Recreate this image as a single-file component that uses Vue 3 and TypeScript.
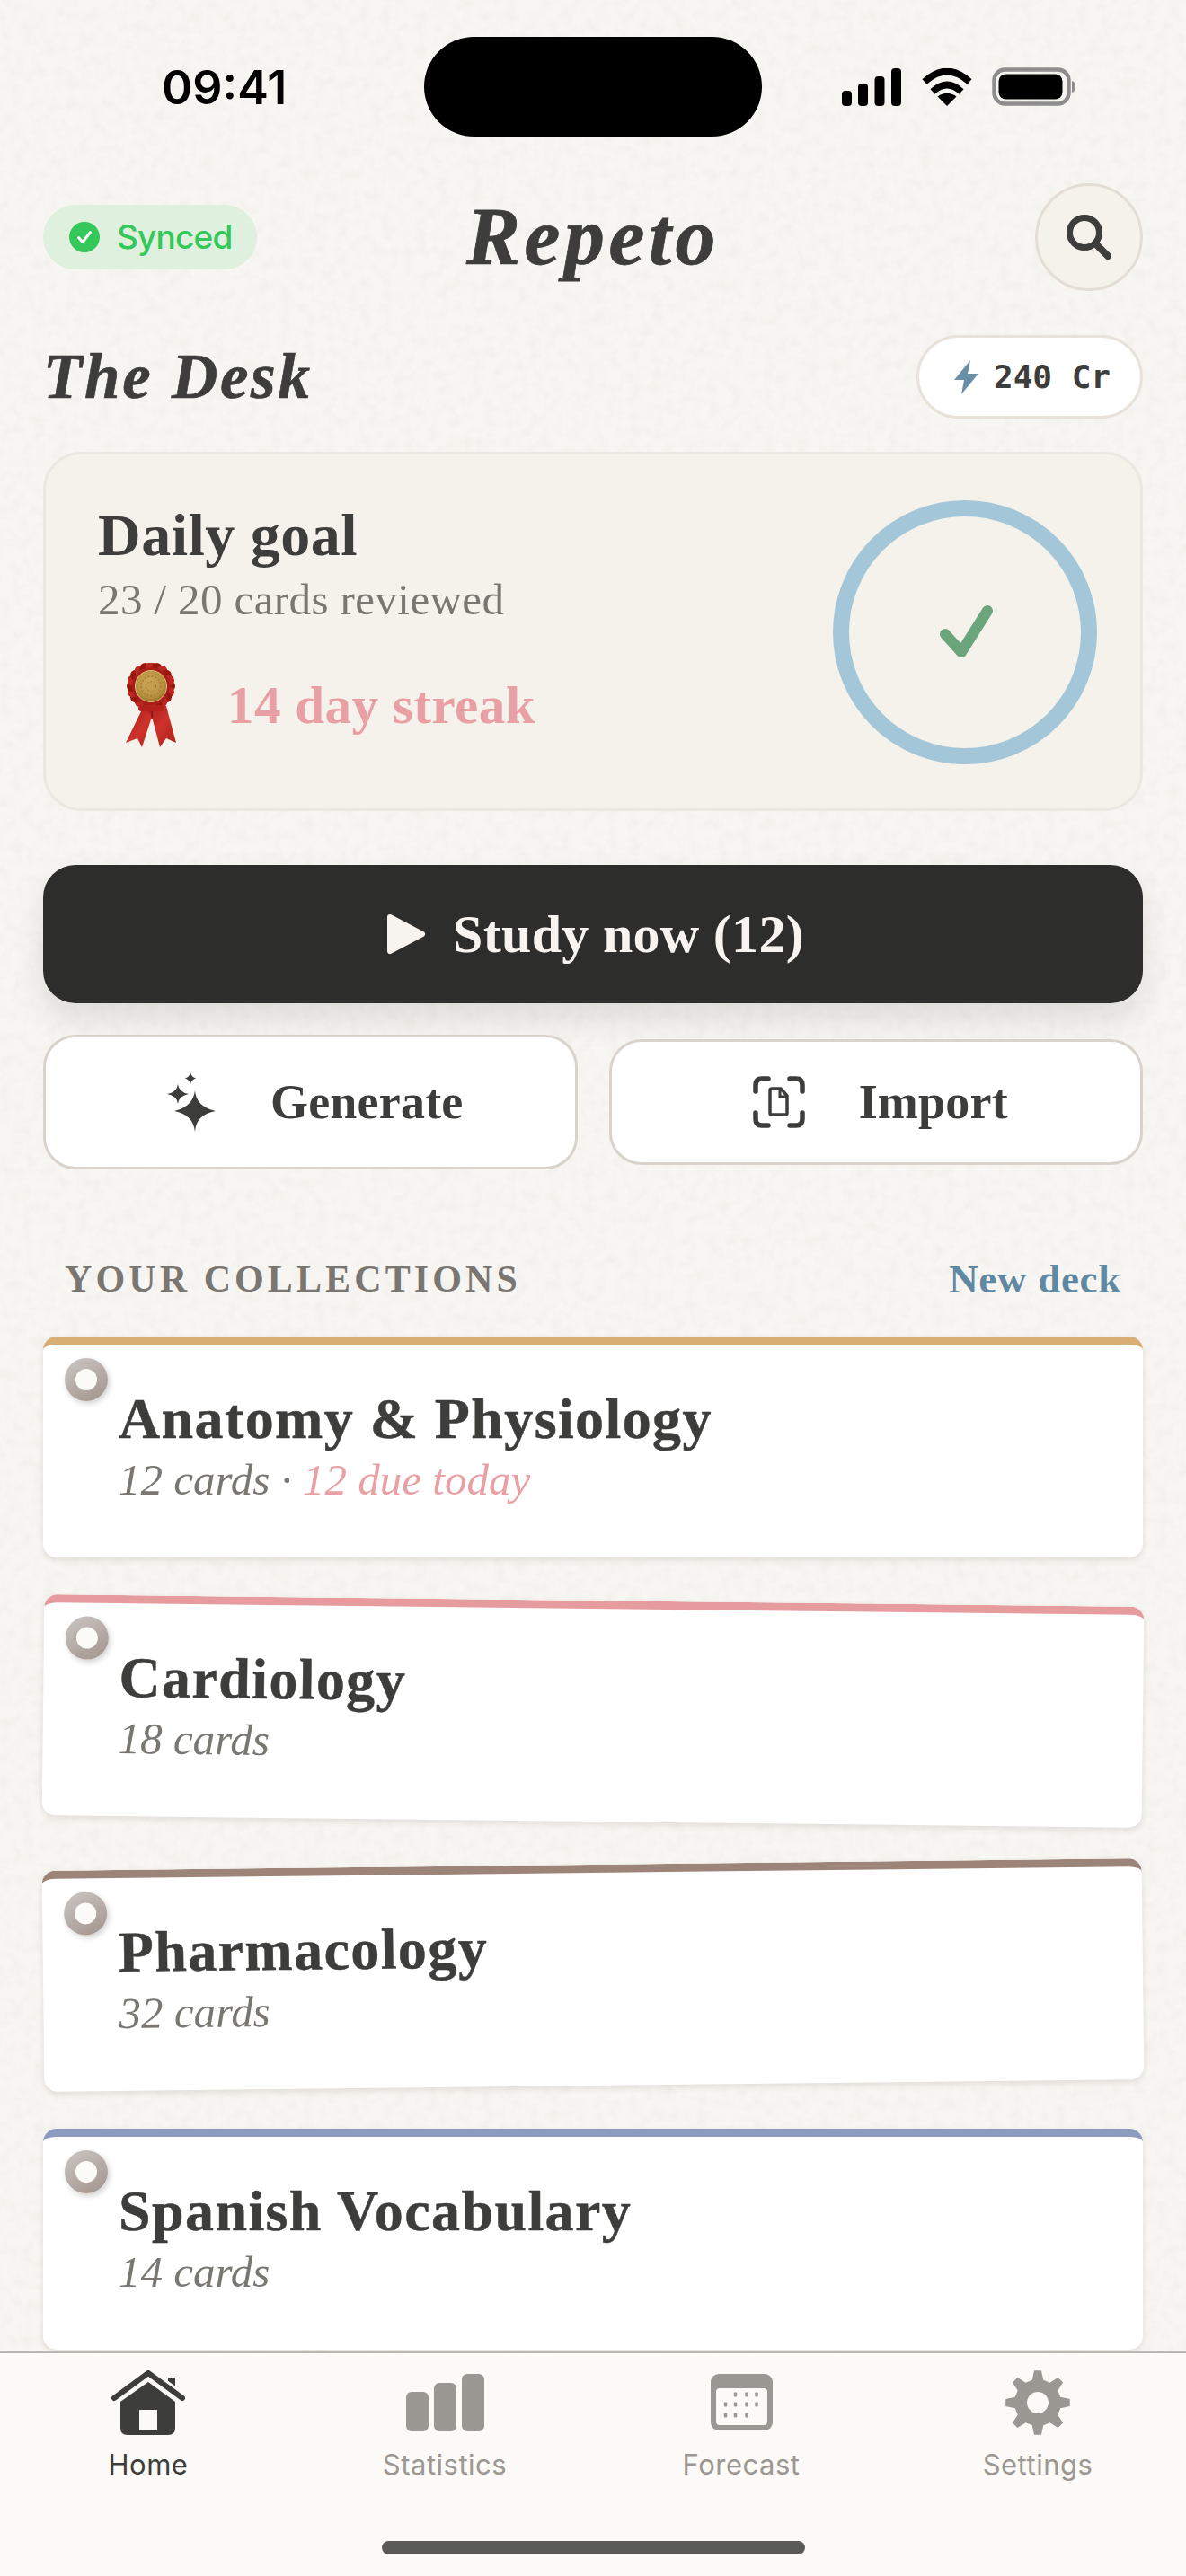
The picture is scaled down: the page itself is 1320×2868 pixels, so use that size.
<template>
  <div class="phone">
    <svg class="paper" width="1320" height="2868" aria-hidden="true">
      <filter id="grain" x="0" y="0" width="100%" height="100%">
        <feTurbulence type="fractalNoise" baseFrequency="0.08" numOctaves="4" seed="7" />
        <feColorMatrix type="matrix" values="0 0 0 0 0.6  0 0 0 0 0.58  0 0 0 0 0.52  0 0 0 0.24 -0.09" />
      </filter>
      <rect width="1320" height="2868" filter="url(#grain)" />
    </svg>

    <main class="screen">
      <div class="status-bar">
        <span class="time">09:41</span>
        <div class="island"></div>
        <div class="status-icons">
          <svg width="66" height="42" viewBox="0 0 66 42">
            <rect x="0" y="25" width="11" height="17" rx="4" />
            <rect x="18" y="17" width="11" height="25" rx="4" />
            <rect x="36.500" y="9" width="11" height="33" rx="4" />
            <rect x="55" y="0" width="11" height="42" rx="4" />
          </svg>
          <svg width="58" height="42" viewBox="0 0 58 42">
            <path d="M4 15Q29 -8 54 15" fill="none" stroke="#000" stroke-width="7.500" />
            <path d="M13 26Q29 11 45 26" fill="none" stroke="#000" stroke-width="7.500" />
            <path d="M29 42L18.500 31.500Q29 24 39.500 31.500Z" />
          </svg>
          <svg width="94" height="43" viewBox="0 0 94 43">
            <rect x="2.500" y="2.500" width="83" height="38" rx="12" fill="none" stroke="#8d8d8d" stroke-width="4.500" />
            <rect x="7.500" y="7.500" width="71" height="28" rx="8" />
            <path d="M89 15Q93 16 93 21.500Q93 27 89 28Z" fill="#8d8d8d" />
          </svg>
        </div>
      </div>

      <header class="top-bar">
        <div class="sync-pill">
          <svg width="34" height="34" viewBox="0 0 34 34">
            <circle cx="17" cy="17" r="17" fill="#34c759" />
            <path d="M10.500 17.500L15 22.500L23.500 11.500" fill="none" stroke="#fff" stroke-width="3" stroke-linecap="round" stroke-linejoin="round" />
          </svg>
          <span>Synced</span>
        </div>
        <h1 class="logo">Repeto</h1>
        <button class="search-btn">
          <svg width="50" height="50" viewBox="0 0 50 50">
            <circle cx="20" cy="20" r="16.500" fill="none" stroke="#3d3d3b" stroke-width="7" />
            <path d="M33 33L46 46" stroke="#3d3d3b" stroke-width="8" stroke-linecap="round" />
          </svg>
        </button>
      </header>

      <div class="desk-row">
        <h2 class="desk-title">The Desk</h2>
        <div class="credits">
          <svg width="27" height="38" viewBox="0 0 27 38">
            <path d="M18 0L0 22H11L8 38L27 15H15Z" fill="#6a8fa8" />
          </svg>
          <span>240 Cr</span>
        </div>
      </div>

      <section class="goal-card">
        <div class="goal-text">
          <h3>Daily goal</h3>
          <p class="goal-count">23 / 20 cards reviewed</p>
          <div class="streak">
            <svg width="56" height="94" viewBox="0 0 56 94">
              <defs>
                <radialGradient id="gold" cx="0.45" cy="0.4" r="0.65">
                  <stop offset="0" stop-color="#d3ac5c" />
                  <stop offset="0.7" stop-color="#b68f40" />
                  <stop offset="1" stop-color="#8f6b28" />
                </radialGradient>
                <linearGradient id="tail" x1="0" y1="0" x2="1" y2="1">
                  <stop offset="0" stop-color="#9e1c18" />
                  <stop offset="0.5" stop-color="#cf322b" />
                  <stop offset="1" stop-color="#a81f1a" />
                </linearGradient>
              </defs>
              <path d="M20 48L0 89L13 84L18 94L29 60L38 48Z" fill="url(#tail)" />
              <path d="M29 60L38 94L45 84L56 89L45 48L20 48Z" fill="url(#tail)" />
              <path d="M29 48V62" stroke="#8c1512" stroke-width="1.500" />
              <circle v-for="p in pleats" :key="p.key" :cx="p.x" :cy="p.y" r="6" :fill="p.fill" />
              <circle cx="28" cy="26" r="21" fill="#a91d19" />
              <rect x="14" y="47" width="28" height="7" rx="3.500" fill="#b3211c" />
              <circle cx="28" cy="26" r="17.500" fill="url(#gold)" stroke="#e0c077" stroke-width="1" />
              <circle cx="28" cy="26" r="11" fill="none" stroke="#a98437" stroke-width="2" stroke-dasharray="2 2" />
              <circle cx="28" cy="26" r="5.500" fill="#c49f50" stroke="#a07c32" stroke-dasharray="2 1.500" />
            </svg>
            <span>14 day streak</span>
          </div>
        </div>
        <svg class="ring" width="294" height="294" viewBox="0 0 294 294">
          <circle cx="147" cy="147" r="138" fill="none" stroke="#a3c7d9" stroke-width="18" />
          <path d="M125 149L143 169L172 123" fill="none" stroke="#6aa57b" stroke-width="12" stroke-linecap="round" stroke-linejoin="round" />
        </svg>
      </section>

      <button class="study-btn">
        <svg width="44" height="46" viewBox="0 0 44 46">
          <path d="M4 4L40 23L4 42Z" fill="#f7f4ef" stroke="#f7f4ef" stroke-width="6" stroke-linejoin="round" />
        </svg>
        <span>Study now (12)</span>
      </button>

      <div class="action-row">
        <button class="action-btn generate">
          <svg width="56" height="66" viewBox="0 0 56 66">
            <path d="M32 20Q33 38 55 43Q33 47 32 66Q30 47 9 43Q30 38 32 20Z" fill="#3d3d3b" />
            <path d="M13 13Q14 22 25 24Q14 26 13 35Q12 26 1 24Q12 22 13 13Z" fill="#3d3d3b" />
            <path d="M27 0Q28 5 33 6.500Q28 8 27 13Q26 8 21 6.500Q26 5 27 0Z" fill="#3d3d3b" />
          </svg>
          <span>Generate</span>
        </button>
        <button class="action-btn">
          <svg width="58" height="58" viewBox="0 0 58 58">
            <path d="M3 17V10Q3 3 10 3H17M41 3H48Q55 3 55 10V17M55 41V48Q55 55 48 55H41M17 55H10Q3 55 3 48V41" fill="none" stroke="#3d3d3b" stroke-width="5.500" stroke-linecap="round" />
            <path d="M21 14H31L38 22V41Q38 43 36 43H21Q19 43 19 41V16Q19 14 21 14Z" fill="none" stroke="#3d3d3b" stroke-width="3.500" stroke-linejoin="round" />
            <path d="M30 15V23H37" fill="none" stroke="#3d3d3b" stroke-width="3" />
          </svg>
          <span>Import</span>
        </button>
      </div>

      <div class="section-head">
        <span class="section-label">YOUR COLLECTIONS</span>
        <a class="new-deck">New deck</a>
      </div>

      <div class="deck-list">
        <article
          v-for="deck in decks"
          :key="deck.name"
          class="deck"
          :class="deck.tilt"
          :style="{ borderTopColor: deck.color }"
        >
          <span class="grommet"><i></i></span>
          <h4>{{ deck.name }}</h4>
          <p>{{ deck.cards }} cards<template v-if="deck.due"> · <em>{{ deck.due }} due today</em></template></p>
        </article>
      </div>
    </main>

    <nav class="tab-bar">
      <div class="tabs">
        <div class="tab active">
          <svg width="82" height="72" viewBox="0 0 82 72">
            <rect x="63" y="8" width="8" height="18" fill="#3d3d3b" />
            <path d="M3 31L41 3L79 31" fill="none" stroke="#fbfaf6" stroke-width="12" stroke-linecap="round" stroke-linejoin="round" />
            <path d="M3 31L41 3L79 31" fill="none" stroke="#3d3d3b" stroke-width="6" stroke-linecap="round" stroke-linejoin="round" />
            <path d="M41 13L71 35V64Q71 72 63 72H18Q10 72 10 64V35Z" fill="#3d3d3b" />
            <rect x="31" y="44" width="20" height="23" fill="#fbfaf6" />
          </svg>
          <span>Home</span>
        </div>
        <div class="tab">
          <svg width="87" height="72" viewBox="0 0 87 72">
            <rect x="0" y="24" width="25" height="44" rx="6" />
            <rect x="31" y="14" width="25" height="54" rx="6" />
            <rect x="62" y="4" width="25" height="64" rx="6" />
          </svg>
          <span>Statistics</span>
        </div>
        <div class="tab">
          <svg width="69" height="72" viewBox="0 0 69 72">
            <rect x="0" y="4" width="69" height="63" rx="9" />
            <rect x="6" y="20" width="57" height="41" rx="4" fill="#fbfaf6" />
            <rect v-for="d in calendarDots" :key="d.key" :x="d.x" :y="d.y" width="3.500" height="5" rx="1" />
          </svg>
          <span>Forecast</span>
        </div>
        <div class="tab">
          <svg width="72" height="72" viewBox="0 0 72 72">
            <path :d="gearPath" fill-rule="evenodd" />
          </svg>
          <span>Settings</span>
        </div>
      </div>
      <div class="home-indicator"></div>
    </nav>
  </div>
</template>

<script setup lang="ts">
type Deck = { name: string; cards: number; due?: number; color: string; tilt?: string }

const decks: Deck[] = [
  { name: 'Anatomy & Physiology', cards: 12, due: 12, color: '#d8ae74' },
  { name: 'Cardiology', cards: 18, color: '#e69b9e', tilt: 'tilt-right' },
  { name: 'Pharmacology', cards: 32, color: '#9c8478', tilt: 'tilt-left' },
  { name: 'Spanish Vocabulary', cards: 14, color: '#8c9bbf' }
]

const pleats = Array.from({ length: 20 }, (_, i) => {
  const a = (i / 20) * Math.PI * 2
  return {
    key: i,
    x: +(28 + Math.cos(a) * 21).toFixed(2),
    y: +(26 + Math.sin(a) * 21).toFixed(2),
    fill: i % 2 ? '#bd2721' : '#97170f'
  }
})

const calendarDots = [
  [27.5, 25], [40, 25], [51, 25],
  [16.5, 36], [27.5, 36], [40, 36], [51, 36],
  [16.5, 48], [27.5, 48], [40, 48]
].map(([x, y], key) => ({ key, x: x - 1.75, y: y - 0.5 }))

// gearshape with 8 teeth, outer ring plus hole
const gearPath = (() => {
  const teeth = 8
  const pts: string[] = []
  for (let i = 0; i < teeth; i++) {
    const a = (i / teeth) * Math.PI * 2 - Math.PI / 2
    const step = Math.PI / teeth
    const corners: [number, number][] = [
      [26, a - step * 0.62],
      [36, a - step * 0.28],
      [36, a + step * 0.28],
      [26, a + step * 0.62]
    ]
    for (const [r, t] of corners) {
      pts.push(`${(36 + Math.cos(t) * r).toFixed(2)} ${(36 + Math.sin(t) * r).toFixed(2)}`)
    }
  }
  return `M${pts.join('L')}Z M36 24a12 12 0 1 0 .01 0Z`
})()
</script>

<style scoped>
.phone {
  position: relative;
  width: 1320px;
  height: 2868px;
  overflow: hidden;
  background: #f8f6f2;
  display: flex;
  flex-direction: column;
  font-family: "Liberation Serif", serif;
  color: #3d3d3b;
}
.paper {
  position: absolute;
  top: 0;
  left: 0;
}
.screen {
  position: relative;
  flex: 1;
  min-height: 0;
  overflow: hidden;
  padding: 0 48px;
  display: flex;
  flex-direction: column;
}
.status-bar {
  position: relative;
  height: 203px;
  flex-shrink: 0;
}
.time {
  position: absolute;
  left: 132px;
  top: 68px;
  font: 600 52px/60px Inter, sans-serif;
  color: #000;
}
.island {
  position: absolute;
  left: 424px;
  top: 41px;
  width: 376px;
  height: 111px;
  border-radius: 56px;
  background: #000;
}
.status-icons {
  position: absolute;
  left: 889px;
  top: 75px;
  width: 261px;
  display: flex;
  justify-content: space-between;
  align-items: center;
}
.top-bar {
  display: grid;
  grid-template-columns: 1fr auto 1fr;
  align-items: center;
  height: 121px;
  flex-shrink: 0;
}
.sync-pill {
  display: flex;
  align-items: center;
  gap: 19px;
  height: 72px;
  width: 238px;
  padding-left: 29px;
  box-sizing: border-box;
  border-radius: 36px;
  background: #dff0de;
  color: #34c759;
  font: 500 37px/1 Inter, sans-serif;
  letter-spacing: -0.800px;
}
.logo {
  margin: 0;
  font-size: 90px;
  font-weight: 700;
  font-style: italic;
  line-height: 100px;
  letter-spacing: 4.500px;
  -webkit-text-stroke: 0.8px #3d3d3b;
}
.search-btn {
  justify-self: end;
  width: 120px;
  height: 120px;
  padding: 0;
  border-radius: 50%;
  border: 3px solid #e4ddd5;
  background: #f5f1eb;
  display: flex;
  align-items: center;
  justify-content: center;
}
.desk-row {
  display: flex;
  align-items: center;
  justify-content: space-between;
  margin-top: 49px;
  flex-shrink: 0;
}
.desk-title {
  margin: 0;
  font-size: 71px;
  font-weight: 700;
  font-style: italic;
  line-height: 93px;
  letter-spacing: 2.700px;
  -webkit-text-stroke: 0.7px #3d3d3b;
}
.credits {
  display: flex;
  align-items: center;
  gap: 17px;
  height: 93px;
  width: 252px;
  padding-left: 39px;
  box-sizing: border-box;
  border-radius: 47px;
  background: #fff;
  border: 3px solid #e8e2da;
  font: 700 36px/1 "DejaVu Sans Mono", monospace;
}
.goal-card {
  margin-top: 37px;
  height: 400px;
  flex-shrink: 0;
  box-sizing: border-box;
  border: 3px solid #ebe7e1;
  border-radius: 42px;
  background: #f5f1eb;
  padding: 51px 48px 0 58px;
  display: flex;
  justify-content: space-between;
  align-items: flex-start;
}
.goal-text {
  padding-top: 3px;
}
.goal-text h3 {
  margin: 0;
  font-size: 66px;
  font-weight: 700;
  line-height: 72px;
  letter-spacing: 0.500px;
}
.goal-count {
  margin: 8px 0 0;
  font-size: 49px;
  line-height: 56px;
  letter-spacing: 0.400px;
  color: #7a7772;
}
.streak {
  display: flex;
  align-items: center;
  gap: 57px;
  margin: 42px 0 0 31px;
  color: #e8a0a5;
  font-size: 59px;
  font-weight: 700;
  letter-spacing: 0.500px;
}
.study-btn {
  margin-top: 60px;
  height: 154px;
  flex-shrink: 0;
  border: none;
  border-radius: 36px;
  padding: 0 0 0 5px;
  background: #2d2d2b;
  color: #f7f4ef;
  box-shadow: 0 18px 36px rgba(0, 0, 0, 0.1);
  display: flex;
  align-items: center;
  justify-content: center;
  gap: 30px;
  font-family: inherit;
  font-size: 60px;
  font-weight: 700;
  letter-spacing: 0.300px;
}
.action-row {
  margin-top: 35px;
  height: 150px;
  flex-shrink: 0;
  display: grid;
  grid-template-columns: 1fr 1fr;
  gap: 35px;
  align-items: center;
}
.action-btn {
  height: 140px;
  padding: 0 0 0 10px;
  background: #fff;
  border: 3px solid #d9d3cc;
  border-radius: 36px;
  color: #3d3d3b;
  display: flex;
  align-items: center;
  justify-content: center;
  gap: 60px;
  font-family: inherit;
  font-size: 54px;
  font-weight: 700;
  letter-spacing: 0.200px;
}
.generate {
  height: 150px;
}
.section-head {
  margin-top: 98px;
  padding: 0 24px;
  height: 48px;
  flex-shrink: 0;
  display: flex;
  align-items: center;
  justify-content: space-between;
}
.section-label {
  font-size: 42px;
  font-weight: 700;
  letter-spacing: 4.100px;
  color: #7a7772;
}
.new-deck {
  font-size: 45px;
  font-weight: 700;
  letter-spacing: 0.700px;
  color: #6088a2;
}
.deck-list {
  margin-top: 40px;
  display: flex;
  flex-direction: column;
  gap: 48px;
}
.deck {
  position: relative;
  height: 246px;
  flex-shrink: 0;
  box-sizing: border-box;
  padding: 50px 0 0 84px;
  background: #fff;
  border-top: 9px solid;
  border-radius: 15px;
  box-shadow: 0 3px 7px rgba(70, 60, 50, 0.12);
}
.tilt-right {
  transform: rotate(0.65deg);
}
.tilt-left {
  transform: rotate(-0.65deg);
}
.grommet {
  position: absolute;
  left: 24px;
  top: 15px;
  width: 48px;
  height: 48px;
  border-radius: 50%;
  background: linear-gradient(150deg, #cbc7c4, #a2928b);
  box-shadow: 2px 3px 6px rgba(0, 0, 0, 0.18);
  display: flex;
  align-items: center;
  justify-content: center;
}
.grommet i {
  width: 24px;
  height: 24px;
  border-radius: 50%;
  background: #fdfbf7;
}
.deck h4 {
  margin: 0;
  font-size: 64px;
  font-weight: 700;
  line-height: 66px;
  letter-spacing: 1.400px;
  -webkit-text-stroke: 0.5px #3d3d3b;
}
.deck p {
  margin: 7px 0 0;
  font-size: 49px;
  font-style: italic;
  line-height: 56px;
  color: #7a7772;
}
.deck em {
  color: #e8a0a5;
}
.tab-bar {
  position: relative;
  height: 250px;
  flex-shrink: 0;
  box-sizing: border-box;
  background: #fbfaf6;
  border-top: 2px solid #b9b7b1;
}
.tabs {
  display: grid;
  grid-template-columns: repeat(4, 1fr);
  padding-top: 19px;
}
.tab {
  display: flex;
  flex-direction: column;
  align-items: center;
  gap: 14px;
  color: #9b9893;
  fill: #9b9893;
  font: 400 31px/38px Inter, sans-serif;
  letter-spacing: 0.500px;
}
.tab.active {
  color: #3d3d3b;
}
.home-indicator {
  position: absolute;
  left: 425px;
  top: 209px;
  width: 471px;
  height: 15px;
  border-radius: 8px;
  background: #5a5a58;
}
</style>

<style>
html,
body {
  margin: 0;
  padding: 0;
}
</style>
